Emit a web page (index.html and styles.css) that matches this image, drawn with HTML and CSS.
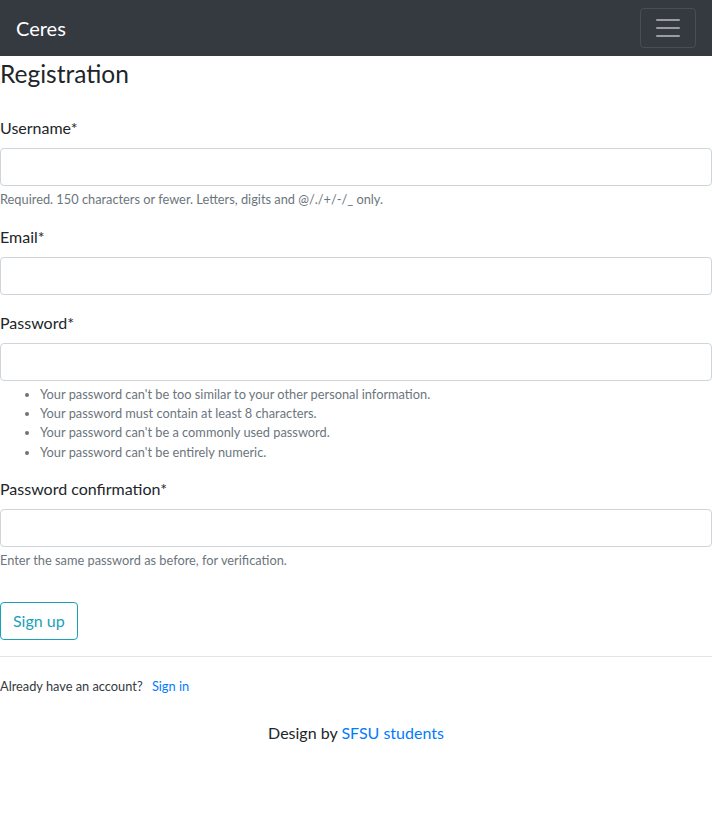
FILE: index.html
```html
<!DOCTYPE html>
<html lang="en">
<head>
<meta charset="utf-8">
<title>Ceres - Registration</title>
<link rel="stylesheet" href="styles.css">
</head>
<body>
<nav class="navbar">
  <a class="brand" href="#">Ceres</a>
  <button class="toggler" type="button" aria-label="Toggle navigation">
    <svg width="30" height="30" viewBox="0 0 30 30"><path d="M4 7h22M4 15h22M4 23h22" stroke="rgba(255,255,255,0.5)" stroke-width="2" stroke-linecap="round" fill="none"/></svg>
  </button>
</nav>
<main class="content">
  <h4 class="title">Registration</h4>
  <form class="form">
    <div class="group">
      <label class="label">Username*</label>
      <input class="input" type="text">
      <small class="help">Required. 150 characters or fewer. Letters, digits and @/./+/-/_ only.</small>
    </div>
    <div class="group">
      <label class="label">Email*</label>
      <input class="input" type="email">
    </div>
    <div class="group">
      <label class="label">Password*</label>
      <input class="input" type="password">
      <ul class="help rules">
        <li>Your password can't be too similar to your other personal information.</li>
        <li>Your password must contain at least 8 characters.</li>
        <li>Your password can't be a commonly used password.</li>
        <li>Your password can't be entirely numeric.</li>
      </ul>
    </div>
    <div class="group">
      <label class="label">Password confirmation*</label>
      <input class="input" type="password">
      <small class="help">Enter the same password as before, for verification.</small>
    </div>
    <div class="actions">
      <button class="btn-outline" type="submit">Sign up</button>
    </div>
  </form>
  <hr class="divider">
  <div class="signin">
    <small>Already have an account? <a class="link signin-link" href="#">Sign in</a></small>
  </div>
</main>
<footer class="footer">Design by <a class="link" href="#">SFSU students</a></footer>
</body>
</html>
```
FILE: styles.css
```css
* { box-sizing: border-box; }
html, body { margin: 0; padding: 0; }
body {
  font-family: Lato, "Open Sans", "Liberation Sans", sans-serif;
  font-size: 16px;
  line-height: 1.5;
  color: #212529;
  background: #fff;
}
.navbar {
  height: 56px;
  background: #343a40;
  display: flex;
  align-items: center;
  justify-content: space-between;
  padding: 0 16px;
}
.brand {
  color: #fff;
  font-size: 20px;
  text-decoration: none;
  line-height: 30px;
}
.toggler {
  width: 56px;
  height: 40px;
  background: transparent;
  border: 1px solid rgba(255,255,255,0.1);
  border-radius: 4px;
  display: flex;
  align-items: center;
  justify-content: center;
  padding: 0;
}
.toggler svg { display: block; }
.content { padding: 0; }
.title {
  font-size: 24.5px;
  font-weight: 400;
  line-height: 28.8px;
  margin: 4px 0 27px;
}
.form { margin: 0; }
.group { margin-bottom: 16px; }
.label {
  display: block;
  margin-bottom: 8px;
}
.input {
  display: block;
  width: 100%;
  height: 38px;
  border: 1px solid #ced4da;
  border-radius: 4px;
  padding: 6px 12px;
  font: inherit;
}
.help {
  display: block;
  margin-top: 4px;
  font-size: 12.8px;
  line-height: 19.2px;
  color: #6c757d;
}
.rules {
  margin: 4px 0 0;
  padding-left: 40px;
}
.group:has(.rules) { margin-bottom: 15px; }
.actions { padding-top: 16px; }
.btn-outline {
  font: inherit;
  font-size: 16px;
  color: #17a2b8;
  background: transparent;
  border: 1px solid #17a2b8;
  border-radius: 4px;
  height: 38px;
  padding: 6px 12px;
  line-height: 24px;
}
.divider {
  border: 0;
  border-top: 1px solid rgba(0,0,0,0.1);
  margin: 16px 0;
}
.signin {
  padding-top: 4px;
  font-size: 12.8px;
}
.signin small { font-size: 12.8px; line-height: 19.2px; color: #343a40; }
.link { color: #007bff; text-decoration: none; }
.signin-link { margin-left: 6px; }
.footer {
  text-align: center;
  margin-top: 25px;
}
```
